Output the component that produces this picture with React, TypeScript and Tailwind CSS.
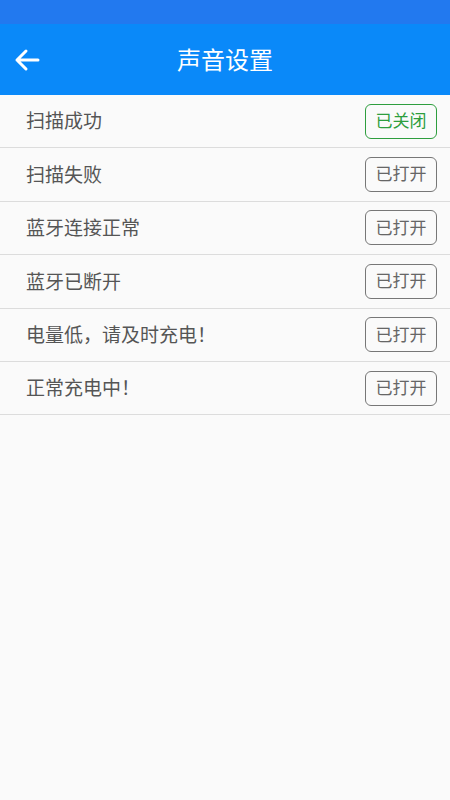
import React from 'react';

interface SoundItem {
  label: string;
  on: boolean;
}

const items: SoundItem[] = [
  { label: '扫描成功', on: false },
  { label: '扫描失败', on: true },
  { label: '蓝牙连接正常', on: true },
  { label: '蓝牙已断开', on: true },
  { label: '电量低，请及时充电！', on: true },
  { label: '正常充电中！', on: true },
];

const font = "font-['Roboto','Noto_Sans_CJK_SC',sans-serif]";

const App: React.FC = () => {
  return (
    <div className={`w-[450px] h-[800px] bg-[#fafafa] flex flex-col ${font}`}>
      <div className="h-[24px] bg-[#2279ef]" />
      <div className="h-[71px] bg-[#0a89f9] flex items-center relative">
        <button className="w-[52px] h-full flex items-center justify-center pl-[1px]">
          <svg width="26" height="24" viewBox="0 0 26 24" fill="none" stroke="white" strokeWidth="3" strokeLinecap="round" strokeLinejoin="round">
            <path d="M24 12H3M12 3L3 12l9 9" />
          </svg>
        </button>
        <h1 className="absolute left-0 right-0 pt-[3px] text-center text-white text-[24px] pointer-events-none">声音设置</h1>
      </div>
      <div className="flex flex-col">
        {items.map((item) => (
          <div key={item.label} className="h-[53.4px] border-b border-[#dcdcdc] flex items-center justify-between pl-[26px] pr-[13px]">
            <span className="pt-[3px] text-[19px] text-[#555555]">{item.label}</span>
            <span
              className={
                item.on
                  ? 'w-[72px] h-[35px] pt-[1px] rounded-[6px] border border-[#777777] text-[#666666] text-[17px] flex items-center justify-center'
                  : 'w-[72px] h-[35px] pt-[1px] rounded-[6px] border border-[#2e9e3e] text-[#2e9e3e] text-[17px] flex items-center justify-center'
              }
            >
              {item.on ? '已打开' : '已关闭'}
            </span>
          </div>
        ))}
      </div>
    </div>
  );
};

export default App;
